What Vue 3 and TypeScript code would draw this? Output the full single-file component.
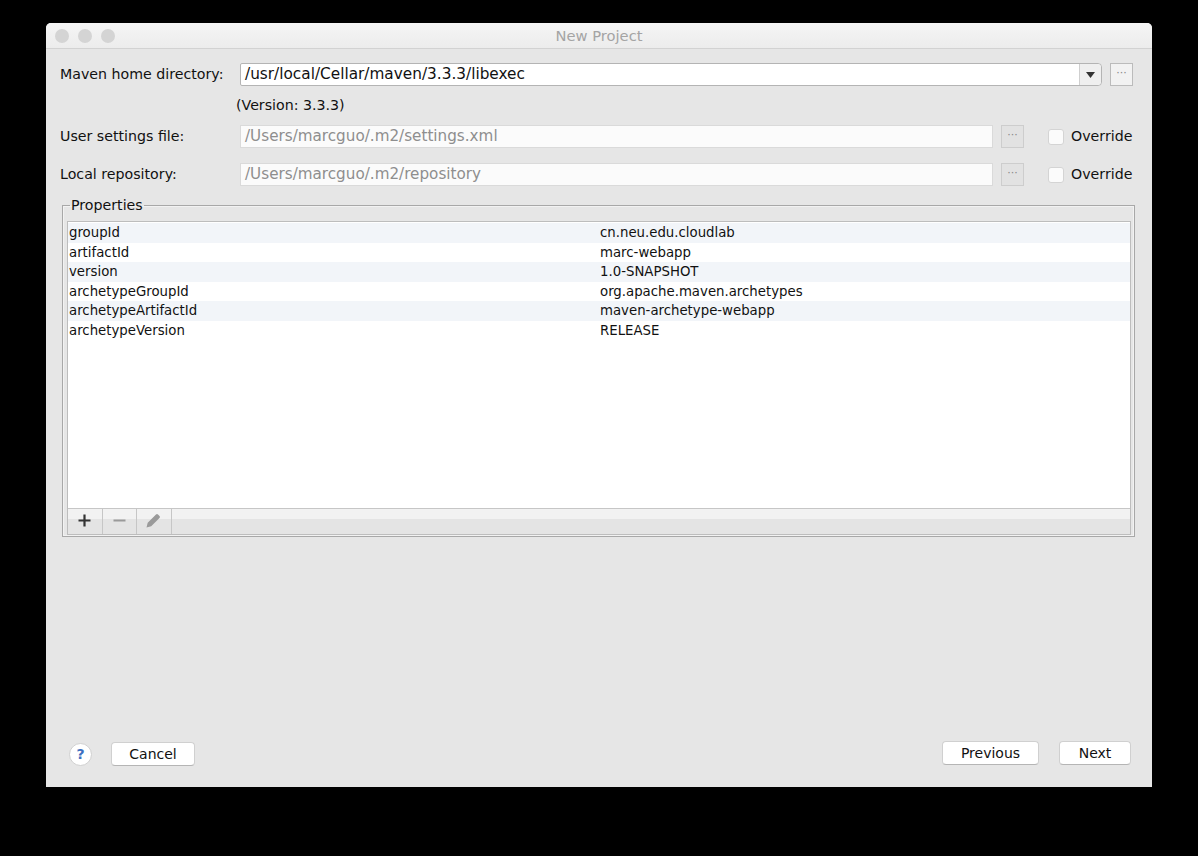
<template>
  <div class="window">
    <div class="titlebar">
      <div class="lights"><i></i><i></i><i></i></div>
      <div class="title">New Project</div>
    </div>
    <div class="content">
      <div class="row first">
        <label>Maven home directory:</label>
        <div class="combo">
          <span class="combo-text">/usr/local/Cellar/maven/3.3.3/libexec</span>
          <span class="combo-arrow"><svg width="9" height="6" viewBox="0 0 9 6"><path d="M0 0h9L4.500 6z" fill="#333" /></svg></span>
        </div>
        <button class="dots active">···</button>
      </div>
      <div class="version">(Version: 3.3.3)</div>
      <div v-for="f in fields" :key="f.label" class="row setting">
        <label>{{ f.label }}</label>
        <div class="field">{{ f.value }}</div>
        <button class="dots">···</button>
        <span class="check"></span>
        <span class="override">Override</span>
      </div>

      <fieldset class="props">
        <legend>Properties</legend>
        <div class="table">
          <div class="rows">
            <div v-for="(p, i) in props" :key="p[0]" class="prop" :class="{ odd: i % 2 === 0 }">
              <span class="key">{{ p[0] }}</span>
              <span class="val">{{ p[1] }}</span>
            </div>
          </div>
          <div class="toolbar">
            <span class="tool">
              <svg width="13" height="13" viewBox="0 0 13 13"><path d="M6.500 0.500v12M0.500 6.500h12" stroke="#333" stroke-width="2.200" fill="none" /></svg>
            </span>
            <span class="tool">
              <svg width="13" height="13" viewBox="0 0 13 13"><path d="M0.500 6.500h12" stroke="#9a9a9a" stroke-width="2" fill="none" /></svg>
            </span>
            <span class="tool">
              <svg width="15" height="15" viewBox="0 0 15 15"><path d="M0.500 14.500l1.200-4.700 8.300-8.300q1-1 2 0l1.500 1.500q1 1 0 2l-8.300 8.300z" fill="#9a9a9a" /></svg>
            </span>
            <span class="tool-rest"></span>
          </div>
        </div>
      </fieldset>

      <div class="footer">
        <span class="help">?</span>
        <button class="btn cancel">Cancel</button>
        <span class="spacer"></span>
        <button class="btn previous">Previous</button>
        <button class="btn next">Next</button>
      </div>
    </div>
  </div>
</template>

<script setup lang="ts">
const fields = [
  { label: 'User settings file:', value: '/Users/marcguo/.m2/settings.xml' },
  { label: 'Local repository:', value: '/Users/marcguo/.m2/repository' },
]

const props: [string, string][] = [
  ['groupId', 'cn.neu.edu.cloudlab'],
  ['artifactId', 'marc-webapp'],
  ['version', '1.0-SNAPSHOT'],
  ['archetypeGroupId', 'org.apache.maven.archetypes'],
  ['archetypeArtifactId', 'maven-archetype-webapp'],
  ['archetypeVersion', 'RELEASE'],
]
</script>

<style>
html, body { background: #000; }
</style>

<style scoped>
.window {
  width: 1106px;
  height: 764px;
  margin: 23px 0 0 46px;
  background: #e6e6e6;
  border-radius: 5px 5px 0 0;
  font-family: "DejaVu Sans", sans-serif;
  font-size: 14.200px;
  color: #111;
  display: flex;
  flex-direction: column;
  overflow: hidden;
}
.titlebar {
  height: 25px;
  flex: none;
  display: flex;
  align-items: center;
  justify-content: center;
  position: relative;
  background: linear-gradient(#f5f5f5, #ececec);
  border-bottom: 1px solid #d2d2d2;
}
.lights { position: absolute; left: 9px; top: 6px; display: flex; gap: 9px; }
.lights i { width: 14px; height: 14px; border-radius: 50%; background: #d4d4d4; }
.title { color: #a4a4a4; font-size: 14.700px; }
.content { flex: 1; display: flex; flex-direction: column; padding: 14px 21px 21px 14px; min-height: 0; }
.row { display: flex; align-items: center; }
.row label { width: 180px; flex: none; padding-bottom: 2px; }
.first { height: 23px; margin-right: -2px; }
.combo {
  width: 862px;
  height: 23px;
  flex: none;
  box-sizing: border-box;
  background: #fff;
  border: 1px solid #b4b4b4;
  border-radius: 2px 4px 4px 2px;
  display: flex;
  align-items: center;
  font-size: 15.300px;
}
.combo-text { flex: 1; padding: 0 0 2px 4px; }
.combo-arrow {
  width: 21px;
  height: 100%;
  background: #efefef;
  border-left: 1px solid #cfcfcf;
  display: flex;
  align-items: center;
  justify-content: center;
  border-radius: 0 4px 4px 0;
}
.dots {
  width: 23px;
  height: 23px;
  padding: 0 0 4px;
  margin: 0 0 0 8px;
  flex: none;
  background: #e2e2e2;
  border: 1px solid #cdcdcd;
  color: #888;
  font: 11px "DejaVu Sans", sans-serif;
}
.dots.active { background: #f2f2f2; border-color: #bbb; }
.version { margin: 11px 0 0 176px; height: 28px; }
.setting { height: 23px; margin: 0 -6px 15px 0; }
.field {
  width: 753px;
  height: 23px;
  flex: none;
  box-sizing: border-box;
  line-height: 20px;
  padding-left: 4px;
  background: #fbfbfb;
  border: 1px solid #dadada;
  color: #8e8e8e;
  font-size: 15.200px;
}
.check {
  width: 16px;
  height: 16px;
  flex: none;
  margin-left: 24px;
  background: #fbfbfb;
  border: 1px solid #d4d4d4;
  border-radius: 3px;
  box-sizing: border-box;
}
.override { margin: 0 0 2px 7px; white-space: nowrap; flex: none; }
.props {
  margin: -4px -4px 0 2px;
  padding: 8px 3px 1px 4px;
  height: 340px;
  flex: none;
  box-sizing: border-box;
  min-width: 0;
  border: 1px solid #a8a8a8;
  box-shadow: inset 0 0 0 1px #f2f2f2;
}
.props legend { padding: 0 1px; margin-left: 3px; line-height: 16px; }
.table {
  height: 314px;
  box-sizing: border-box;
  border: 1px solid #bdbdbd;
  background: #fff;
  display: flex;
  flex-direction: column;
}
.rows { flex: 1; padding-top: 1px; }
.prop { height: 19.600px; line-height: 19.600px; display: flex; font-size: 13.300px; padding-left: 1px; }
.prop.odd { background: #f2f5f9; }
.key { width: 531px; flex: none; }
.toolbar {
  height: 25px;
  flex: none;
  display: flex;
  border-top: 1px solid #c6c6c6;
  background: linear-gradient(#f2f2f2 0 40%, #e4e4e4 40%);
}
.tool {
  width: 34.500px;
  box-sizing: border-box;
  border-right: 1px solid #c6c6c6;
  padding-bottom: 2px;
  display: flex;
  align-items: center;
  justify-content: center;
}
.tool-rest { flex: 1; }
.footer { flex: 1; display: flex; align-items: flex-end; padding-left: 9px; }
.help {
  width: 23px;
  height: 23px;
  border-radius: 50%;
  background: #fff;
  border: 1px solid #d0d0d0;
  box-sizing: border-box;
  color: #3d6fc0;
  font-weight: 700;
  font-size: 14px;
  line-height: 21px;
  text-align: center;
}
.btn {
  height: 24px;
  padding: 0;
  background: #fff;
  border: 1px solid #d0d0d0;
  border-bottom-color: #b5b5b5;
  border-radius: 4px;
  color: #111;
  font: 14px "DejaVu Sans", sans-serif;
}
.cancel { width: 84px; margin-left: 19px; }
.spacer { flex: 1; }
.previous { width: 97px; margin-bottom: 1px; }
.next { width: 72px; margin: 0 0 1px 20px; }
</style>
